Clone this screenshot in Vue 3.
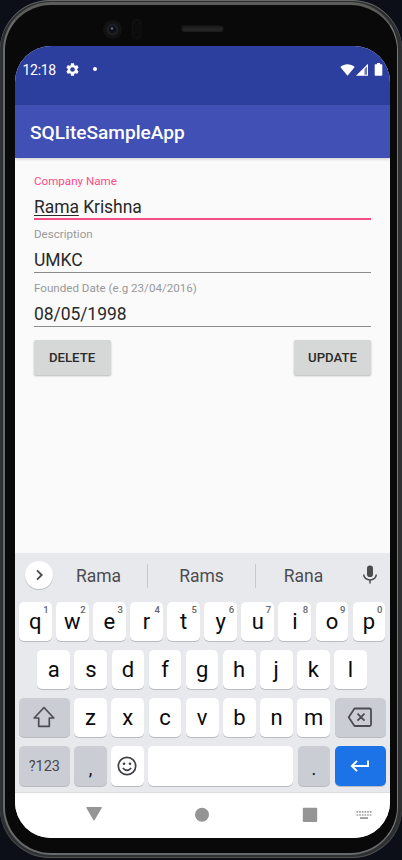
<script setup>
const numbers = '1234567890'
const top = 'qwertyuiop'.split('')
const middle = 'asdfghjkl'.split('')
const bottom = 'zxcvbnm'.split('')
const fields = [
  { label: 'Company Name', marked: 'Rama', value: ' Krishna', active: true },
  { label: 'Description', marked: '', value: 'UMKC', active: false },
  { label: 'Founded Date (e.g 23/04/2016)', marked: '', value: '08/05/1998', active: false }
]
</script>

<template>
  <div class="stage">
    <div class="frame">
      <div class="body">
        <div class="bezel">
          <svg width="402" height="46" viewBox="0 0 402 46">
            <circle cx="112.500" cy="29.500" r="9.500" fill="#121213" />
            <circle cx="112.500" cy="29.500" r="6" fill="#1d1e21" />
            <circle cx="112.500" cy="29.500" r="3.500" fill="#0d0f17" />
            <circle cx="112" cy="28.500" r="1.300" fill="#62687c" />
            <rect x="132.500" y="19.500" width="8.500" height="19.500" rx="3" fill="#0c0c0c" stroke="#111" />
            <circle cx="136.700" cy="23" r="2.500" fill="#090909" stroke="#131313" />
            <circle cx="136.700" cy="34.500" r="2.500" fill="#090909" stroke="#131313" />
            <rect x="181.500" y="25.500" width="42" height="6.500" rx="3" fill="#1c1c1c" />
            <rect x="183" y="28" width="39" height="3" rx="1.500" fill="#242424" />
          </svg>
        </div>
        <main class="screen">
          <header class="status">
            <span class="clock">12:18</span>
            <svg class="gear" width="13" height="13" viewBox="2 2 20 20">
              <path fill="#fff" d="M19.140 12.940c.04-.3.06-.61.06-.94 0-.32-.02-.64-.07-.94l2.030-1.580c.18-.14.23-.41.12-.61l-1.920-3.320c-.12-.22-.37-.29-.59-.22l-2.390.96c-.5-.38-1.030-.7-1.620-.94l-.36-2.540c-.04-.24-.24-.41-.48-.41h-3.840c-.24 0-.43.17-.47.41l-.36 2.540c-.59.24-1.130.57-1.620.94l-2.390-.96c-.22-.08-.47 0-.59.22L2.740 8.870c-.12.21-.08.47.12.61l2.030 1.580c-.05.3-.09.63-.09.94s.02.64.07.94l-2.030 1.580c-.18.14-.23.41-.12.61l1.920 3.320c.12.22.37.29.59.22l2.390-.96c.5.38 1.030.7 1.620.94l.36 2.540c.05.24.24.41.48.41h3.840c.24 0 .44-.17.47-.41l.36-2.540c.59-.24 1.130-.56 1.620-.94l2.390.96c.22.08.47 0 .59-.22l1.920-3.320c.12-.22.07-.47-.12-.61l-2.010-1.580zM12 15.600A3.600 3.600 0 1 1 12 8.400a3.600 3.600 0 0 1 0 7.200z" />
            </svg>
            <i class="dot"></i>
            <svg class="signals" width="43" height="14" viewBox="0 0 43 14">
              <path d="M.3 4C4.500.3 10.500.3 14.700 4L7.500 12.700z" fill="#fff" />
              <path d="M16 12.700 28 .8v11.900z" fill="#fff" />
              <path d="M24.500 6 27 3.500v8.200h-2.500z" fill="#6b78bd" />
              <path d="M37 0h3v1.300h1.500q.8 0 .8.800v9.800q0 .8-.8.800h-6q-.8 0-.8-.8V2.100q0-.8.8-.8H37z" fill="#fff" />
            </svg>
          </header>
          <div class="appbar">SQLiteSampleApp</div>
          <section class="content">
            <div v-for="f in fields" :key="f.label" class="field" :class="{ active: f.active }">
              <label>{{ f.label }}</label>
              <div class="value"><u v-if="f.marked">{{ f.marked }}</u>{{ f.value }}</div>
            </div>
            <div class="actions">
              <button>DELETE</button>
              <button>UPDATE</button>
            </div>
          </section>
          <section class="keyboard">
            <div class="suggestions">
              <span class="expand">
                <svg width="28" height="28" viewBox="0 0 28 28"><path d="M12 9.300 16.700 14 12 18.700" fill="none" stroke="#4c4d50" stroke-width="1.900" /></svg>
              </span>
              <span class="word first">Rama</span>
              <span class="word split">Rams</span>
              <span class="word split final">Rana</span>
              <svg class="mic" width="16" height="20" viewBox="0 0 16 20">
                <rect x="5" y=".5" width="6" height="11.500" rx="2.800" fill="#4b4c4e" />
                <path d="M1.700 9.500a6.300 5.500 0 0 0 12.600 0M8 15v3.600" fill="none" stroke="#4b4c4e" stroke-width="1.500" />
              </svg>
            </div>
            <div class="row">
              <span v-for="(k, i) in top" :key="k" class="key">{{ k }}<sup>{{ numbers[i] }}</sup></span>
            </div>
            <div class="row inset">
              <span v-for="k in middle" :key="k" class="key">{{ k }}</span>
            </div>
            <div class="row">
              <span class="key wide">
                <svg width="24" height="24" viewBox="0 0 24 24"><path d="M12 2.500 21.800 13H17.300v8.300H6.700V13H2.200z" fill="none" stroke="#4c4d50" stroke-width="1.700" stroke-linejoin="round" /></svg>
              </span>
              <span v-for="k in bottom" :key="k" class="key">{{ k }}</span>
              <span class="key wide">
                <svg width="26" height="22" viewBox="0 0 26 22"><path d="M7.500 2.500H22.500Q24 2.500 24 4V18.500Q24 20 22.500 20H7.500L1.700 11.250zM10.500 7.700l7 7m0-7-7 7" fill="none" stroke="#4c4d50" stroke-width="1.800" stroke-linejoin="round" /></svg>
              </span>
            </div>
            <div class="row last">
              <span class="key wide mode">?123</span>
              <span class="key grey punct">,</span>
              <span class="key">
                <svg width="20" height="20" viewBox="0 0 20 20">
                  <circle cx="10" cy="10" r="8.700" fill="none" stroke="#3f4043" stroke-width="1.700" />
                  <circle cx="7" cy="7.700" r="1.300" fill="#3f4043" /><circle cx="13" cy="7.700" r="1.300" fill="#3f4043" />
                  <path d="M5.800 12q4.200 4.800 8.400 0" fill="none" stroke="#3f4043" stroke-width="1.600" />
                </svg>
              </span>
              <span class="key space"></span>
              <span class="key grey punct">.</span>
              <span class="key wide enter">
                <svg width="20" height="14" viewBox="0 0 20 14"><path d="M18 1.500V7H2M7 1.800 1.800 7 7 12.200" fill="none" stroke="#fff" stroke-width="1.900" /></svg>
              </span>
            </div>
          </section>
          <nav class="nav">
            <svg width="375" height="45" viewBox="0 0 375 45" fill="#959595">
              <path d="M72 14H86.200Q87.300 14 86.700 15L79.700 27Q79 28 78.300 27L71.400 15Q71 14 72 14z" />
              <circle cx="187" cy="21.700" r="7" />
              <rect x="287.800" y="14.800" width="14.400" height="14.200" rx="1" />
              <path d="M341.500 18.800H356.500M341.500 22H356.500" stroke="#a2a2a2" stroke-width="1.700" stroke-dasharray="1.700 .95" />
              <rect x="345" y="24.200" width="8" height="1.700" />
            </svg>
          </nav>
        </main>
      </div>
    </div>
  </div>
</template>

<style>
body { background: #0c0f18; overflow: hidden; }
</style>

<style scoped>
* { box-sizing: border-box; }
.stage { width: 402px; height: 860px; overflow: hidden; background: #0c0f18; font-family: Roboto, sans-serif; }
.frame { width: 402px; height: 858px; padding: 2px 4px 3px 3px; border-radius: 50px; background: #2c2e2f; box-shadow: inset 0 1px 0.500px #666, inset 0 -1px 1px #555; }
.body { display: flex; flex-direction: column; height: 853px; border: 2px solid #68696b; border-top: 3px solid #5c5d5b; border-right: 1px solid #77797a; border-radius: 48px; background: #09090a; }
.bezel { flex: none; height: 41px; margin-left: -5px; }
.bezel svg { display: block; margin-top: -5px; }
.screen { width: 375px; height: 792px; margin-left: 10px; flex: none; overflow: hidden; border-radius: 36px; background: #fafafa; display: flex; flex-direction: column; }
.status { height: 59px; flex: none; display: flex; align-items: flex-start; padding: 15px 7px 0 7.500px; background: #2d3f9e; color: #fff; }
.clock { width: 34px; font-size: 14px; line-height: 18px; letter-spacing: -0.300px; }
.gear { margin: 1.500px 0 0 9.500px; }
.dot { width: 4px; height: 4px; border-radius: 50%; background: #fff; margin: 6px 0 0 13.500px; }
.signals { margin: 1.500px 0 0 auto; }
.appbar { height: 53px; flex: none; padding-left: 15px; background: #4150b5; color: #fff; font-weight: 500; font-size: 19.100px; line-height: 56px; box-shadow: 0 1px 3px #0003; z-index: 1; }
.content { height: 395px; flex: none; padding: 15.500px 19px 0; }
.field { height: 53.500px; color: #292929; }
label { display: block; height: 14px; line-height: 14px; font-size: 11.600px; color: #999; }
.value { height: 32px; padding-top: 8px; font-size: 17.500px; line-height: 22px; letter-spacing: -0.070px; border-bottom: 1px solid #8b8b8b; }
.active label { color: #ff4b87; }
.active .value { border-bottom: 2px solid #f54b87; }
u { text-decoration-thickness: 1px; text-underline-offset: 2px; }
.actions { display: flex; justify-content: space-between; padding-top: 6px; margin-left: -0.500px; }
button { width: 77px; height: 35px; border: 0; padding: 0; border-radius: 2px; background: #d6d8d7; color: #2a2a2a; font: 500 13.200px Roboto, sans-serif; box-shadow: 0 1px 2px #0004; }
.keyboard { flex: none; height: 240px; background: #e8e9ed; border-bottom: 1px solid #dcdcdf; }
.suggestions { height: 49px; display: flex; align-items: flex-start; padding: 7.500px 12px 0 9.500px; }
.expand { width: 28.500px; height: 28.500px; background: #fff; border-radius: 50%; box-shadow: 0 1px 1px #0003; }
.word { width: 108px; height: 24px; margin-top: 3px; font-size: 17.500px; line-height: 24px; text-align: center; color: #4c4d50; }
.first { width: 94px; padding-right: 3px; }
.split { border-left: 1px solid #c7c8cb; }
.final { width: 96px; }
.mic { margin: 4px 0 0 auto; }
.row { display: flex; gap: 4.300px; height: 38.500px; margin: 0 4.500px 9.500px 3.800px; }
.row.inset { margin-left: 22.400px; margin-right: 23.200px; }
.row.last { height: 40px; }
.key { flex: 1; min-width: 0; display: flex; align-items: center; justify-content: center; position: relative; background: #fff; border-radius: 5px; box-shadow: 0 1px 0.500px #b9bbc0; font-size: 22px; color: #090909; }
.key sup { position: absolute; top: 2px; right: 3px; font-size: 9.500px; line-height: 11px; color: #65666a; font-weight: 500; }
.wide { flex: 0 0 51px; background: #cbcdd5; }
.grey { background: #cbcdd5; }
.last .mode { font-size: 14.500px; color: #46474a; }
.last .key { flex: 0 0 32.700px; }
.last .wide { flex-basis: 51px; }
.last .space { flex: 1; }
.last .punct { padding-top: 5px; font-size: 18px; }
.last .enter { background: #1c73e8; }
.nav { flex: none; height: 45px; background: #fff; }
.nav svg { display: block; }
</style>
